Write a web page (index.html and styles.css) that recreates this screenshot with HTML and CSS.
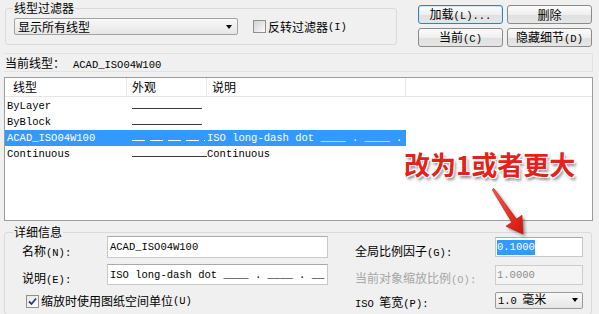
FILE: index.html
```html
<!DOCTYPE html>
<html lang="zh-CN">
<head>
    <meta charset="UTF-8">
    <meta name="viewport" content="width=device-width, initial-scale=1.0">
    <title>线型管理器</title>
    <link rel="stylesheet" href="styles.css">
</head>
<body>
    <div class="top">
        <fieldset class="filter">
            <legend>线型过滤器</legend>
            <div class="filter-row">
                <div class="combo wide">显示所有线型<span class="arrow"></span></div>
                <label class="check"><span class="box"></span>反转过滤器<span class="m">(I)</span></label>
            </div>
        </fieldset>
        <div class="buttons">
            <button class="btn focus">加载<span class="m">(L)...</span></button>
            <button class="btn">删除</button>
            <button class="btn">当前<span class="m">(C)</span></button>
            <button class="btn">隐藏细节<span class="m">(D)</span></button>
        </div>
    </div>

    <div class="current">当前线型：<span class="m name">ACAD_ISO04W100</span></div>

    <div class="list">
        <div class="list-head">
            <div class="h1">线型</div>
            <div class="h2">外观</div>
            <div class="h3">说明</div>
            <div></div>
        </div>
        <div class="rows">
            <div class="row">
                <div class="c1 m">ByLayer</div>
                <div class="c2"><span class="line"></span></div>
                <div class="c3 m"></div>
            </div>
            <div class="row">
                <div class="c1 m">ByBlock</div>
                <div class="c2"><span class="line"></span></div>
                <div class="c3 m"></div>
            </div>
            <div class="row selected">
                <div class="c1 m">ACAD_ISO04W100</div>
                <div class="c2"><span class="line dashed"></span></div>
                <div class="c3 m">ISO long-dash dot ____ . ____ .</div>
            </div>
            <div class="row">
                <div class="c1 m">Continuous</div>
                <div class="c2"><span class="line long"></span></div>
                <div class="c3 m">Continuous</div>
            </div>
        </div>
    </div>

    <fieldset class="details">
        <legend>详细信息</legend>
        <div class="detail-grid">
            <label class="lbl">名称<span class="m">(N):</span></label>
            <div class="field big m">ACAD_ISO04W100</div>
            <label class="lbl right">全局比例因子<span class="m">(G):</span></label>
            <div class="field small m"><span class="sel">0.1000</span></div>

            <label class="lbl">说明<span class="m">(E):</span></label>
            <div class="field big m">ISO long-dash dot ____ . ____ . __</div>
            <label class="lbl right off">当前对象缩放比例<span class="m">(O):</span></label>
            <div class="field small off m">1.0000</div>

            <label class="check paper"><span class="box on"><svg viewBox="0 0 11 11" width="11" height="11"><path d="M2 5.5 L4.5 8 L9 2.5" fill="none" stroke="#2a3f6f" stroke-width="1.8"/></svg></span>缩放时使用图纸空间单位<span class="m">(U)</span></label>
            <label class="lbl right"><span class="m">ISO</span>&nbsp; 笔宽<span class="m">(P):</span></label>
            <div class="combo small-combo"><span><span class="m">1.0</span>&nbsp; 毫米</span><span class="arrow"></span></div>
        </div>
    </fieldset>

    <div class="note">改为1或者更大</div>
    <svg class="pointer" width="50" height="60" viewBox="0 0 50 60">
        <defs>
            <linearGradient id="red" x1="0" y1="0" x2="1" y2="1">
                <stop offset="0" stop-color="#ff5a4a"/>
                <stop offset="1" stop-color="#d0140c"/>
            </linearGradient>
        </defs>
        <polygon points="8.8,5.4 31.4,36.1 37,32.2 38,51 21,43.2 26.8,39.3 7.2,6.6" fill="url(#red)" stroke="#b80e08" stroke-width="0.6"/>
    </svg>
</body>
</html>
```

FILE: styles.css
```css
body {
    margin: 0;
    width: 599px;
    height: 314px;
    overflow: hidden;
    position: relative;
    background: #f0f0f0;
    font-family: "Noto Sans CJK SC", sans-serif;
    font-size: 12px;
    line-height: 16px;
    color: #000;
}

.m {
    font-family: "Liberation Mono", "Noto Sans CJK SC", monospace;
    font-size: 10.5px;
}

/* top area */
.top {
    display: flex;
    align-items: flex-start;
    padding-left: 5px;
}

.filter {
    box-sizing: border-box;
    width: 392px;
    margin: 1px 0 0 0;
    padding: 3px 8px 9px 7px;
    border: 1px solid #dadada;
    border-radius: 3px;
}

legend {
    padding: 0 1px;
    line-height: 14px;
}

.filter-row {
    display: flex;
    align-items: center;
}

.combo {
    box-sizing: border-box;
    display: flex;
    align-items: center;
    justify-content: space-between;
    height: 17px;
    padding: 0 5px 0 3px;
    border: 1px solid #a3a3a3;
    border-radius: 2px;
    background: linear-gradient(#f8f8f8, #e6e6e6);
    line-height: 15px;
}

.combo.wide {
    width: 224px;
    margin-left: 1px;
}

.arrow {
    width: 0;
    height: 0;
    border-left: 3.5px solid transparent;
    border-right: 3.5px solid transparent;
    border-top: 4px solid #000;
}

.check {
    display: flex;
    align-items: center;
    line-height: 16px;
}

.filter .check {
    margin-left: 15px;
}

.box {
    box-sizing: border-box;
    width: 13px;
    height: 13px;
    margin-right: 2px;
    border: 1px solid #8e8f8f;
    background: linear-gradient(135deg, #d2d2d2, #fbfbfb);
    display: flex;
    align-items: center;
    justify-content: center;
}

.box.on {
    background: linear-gradient(135deg, #e6e6e6, #ffffff);
}

.buttons {
    display: grid;
    grid-template-columns: 85px 85px;
    grid-auto-rows: 19px;
    gap: 4px;
    margin: 5px 0 0 21px;
}

.btn {
    padding: 0;
    font-family: inherit;
    font-size: 12px;
    line-height: 16px;
    color: #000;
    border: 1px solid #8a8a8a;
    border-radius: 3px;
    background: linear-gradient(#fcfcfc, #efefef 50%, #e0e0e0 51%, #e6e6e6);
}

.btn.focus {
    border-color: #3c7fb1;
    box-shadow: inset 0 0 0 1px #cfe8f8;
}

/* current line type */
.current {
    box-sizing: border-box;
    height: 19px;
    margin: 6px 6px 0 4px;
    padding-left: 1px;
    border: 1px solid #e2e2e2;
    border-left: none;
    line-height: 17px;
}

.current .name {
    margin-left: 8px;
}

/* list */
.list {
    box-sizing: border-box;
    height: 144px;
    margin: 5px 6px 0 4px;
    border: 1px solid #9c9c9c;
    background: #fff;
}

.list-head {
    display: grid;
    grid-template-columns: 122px 80px 199px 1fr;
    height: 18px;
    border-bottom: 1px solid #e5e5e5;
    line-height: 18px;
}

.list-head > div {
    border-right: 1px solid #e5e5e5;
}

.list-head > div:last-child {
    border-right: none;
}

.h1 {
    padding-left: 8px;
}

.h2,
.h3 {
    padding-left: 5px;
}

.rows {
    padding-top: 1px;
}

.row {
    display: grid;
    grid-template-columns: 122px 80px 199px;
    width: 401px;
    height: 16px;
    line-height: 16px;
}

.row.selected {
    background: #3399ff;
    color: #fff;
}

.c1 {
    padding-left: 2px;
}

.c2 {
    padding: 10px 0 0 5px;
    box-sizing: border-box;
}

.c3 {
    white-space: pre;
}

.line {
    display: block;
    width: 70px;
    height: 1px;
    background: #3a3a3a;
}

.line.long {
    width: 75px;
}

.line.dashed {
    width: 73px;
    background: repeating-linear-gradient(90deg, #fff 0 13px, transparent 13px 18px);
}

/* details */
.details {
    box-sizing: border-box;
    height: 90px;
    margin: 4px 7px 0 4px;
    padding: 0 8px 0 8px;
    border: 1px solid #dadada;
    border-radius: 3px;
}

.detail-grid {
    display: grid;
    grid-template-columns: 85px 221px 27px 140px 88px;
    grid-template-rows: 22px 21px 18px;
    row-gap: 6px;
    margin: -3px 0 0 9px;
}

.lbl {
    align-self: end;
    margin-bottom: -3px;
    line-height: 16px;
}

.lbl.right {
    grid-column: 4;
}

.off {
    color: #a6a6a6;
}

.field {
    box-sizing: border-box;
    display: flex;
    align-items: center;
    padding-left: 2px;
    background: #fff;
    border: 1px solid #c9c9c9;
    border-top-color: #a9a9a9;
    white-space: pre;
    overflow: hidden;
}

.field.small {
    height: 20px;
    align-self: center;
    padding-left: 1px;
}

.field.small.off {
    background: #f4f4f4;
    border-color: #cdcdcd;
    color: #8c8c8c;
}

.sel {
    background: #3399ff;
    color: #fff;
    line-height: 15px;
}

.check.paper {
    grid-column: 1 / 4;
    margin: 2px 0 0 4px;
}

.small-combo {
    align-self: center;
    padding: 0 4px 0 2px;
    border-color: #9a9a9a;
}

/* annotation over the dialog */
.note {
    position: absolute;
    left: 404px;
    top: 148px;
    font-size: 26px;
    font-weight: 700;
    line-height: 32px;
    color: #e0231b;
    text-shadow: 1px 1px 0 #fff, -1px -1px 0 #fff, 1px -1px 0 #fff, -1px 1px 0 #fff, 2px 3px 3px rgba(0, 0, 0, 0.45);
}

.pointer {
    position: absolute;
    left: 485px;
    top: 183px;
    filter: drop-shadow(2px 2px 1.5px rgba(0, 0, 0, 0.4));
}
```
